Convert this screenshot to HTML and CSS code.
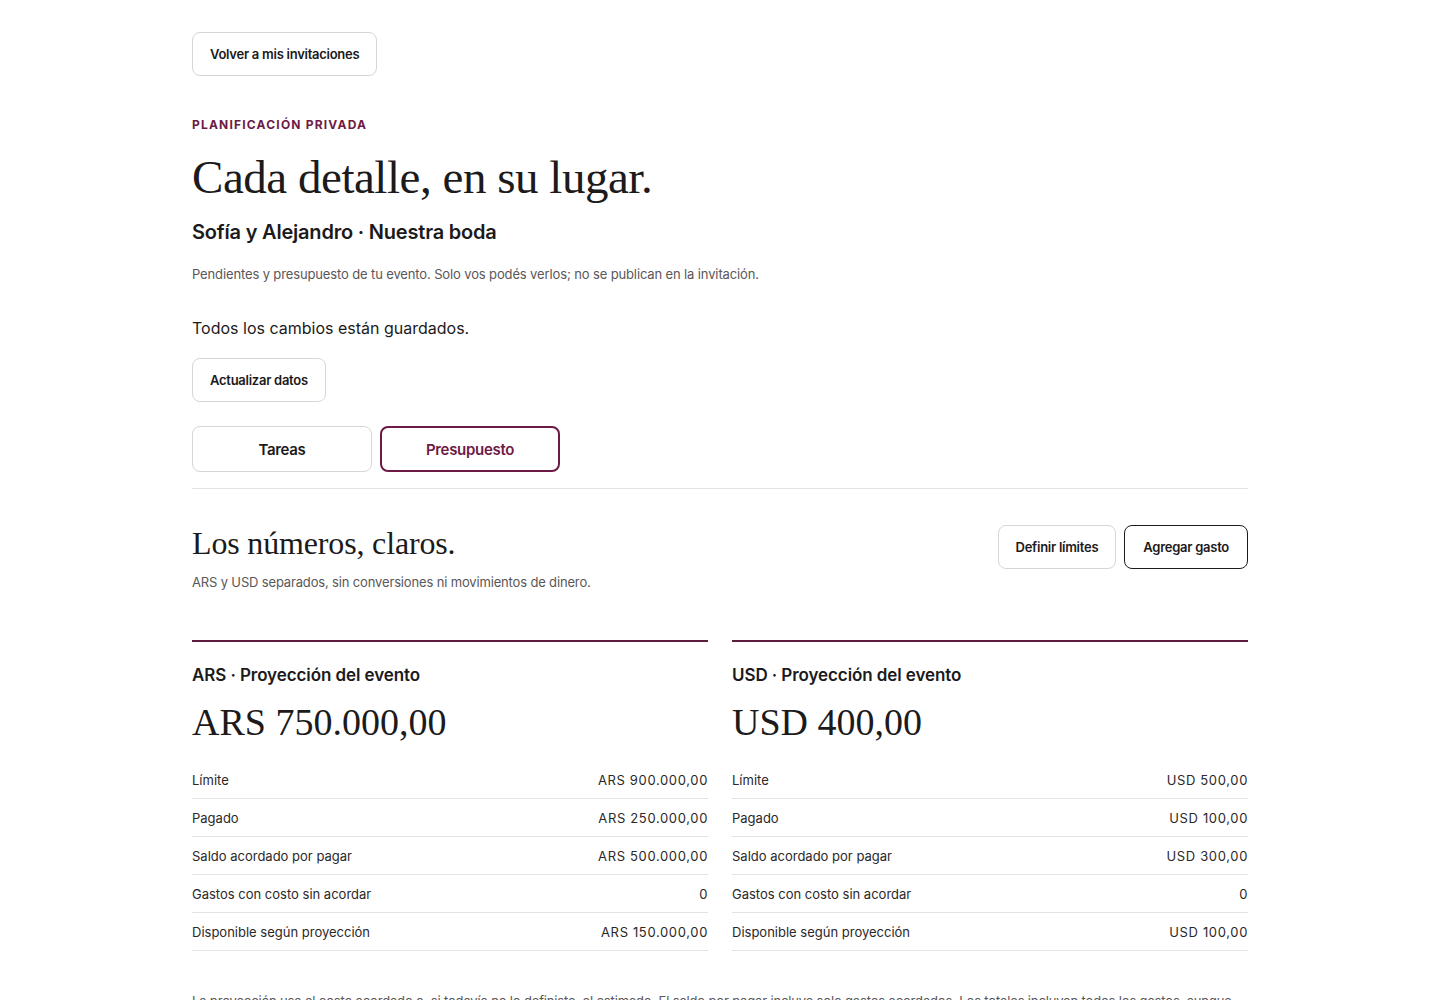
FILE: index.html
```html
<!DOCTYPE html>
<html lang="es">
<head>
<meta charset="utf-8">
<title>Planificación privada</title>
<link rel="stylesheet" href="styles.css">
</head>
<body>
<main class="page">
  <button class="btn btn-back">Volver a mis invitaciones</button>

  <p class="eyebrow">PLANIFICACIÓN PRIVADA</p>
  <h1 class="title">Cada detalle, en su lugar.</h1>
  <p class="event">Sofía y Alejandro · Nuestra boda</p>
  <p class="desc">Pendientes y presupuesto de tu evento. Solo vos podés verlos; no se publican en la invitación.</p>

  <p class="status">Todos los cambios están guardados.</p>
  <button class="btn btn-refresh">Actualizar datos</button>

  <div class="tabs">
    <button class="tab">Tareas</button>
    <button class="tab tab-active">Presupuesto</button>
  </div>

  <section class="budget">
    <div class="budget-head">
      <div>
        <h2 class="section-title">Los números, claros.</h2>
        <p class="section-sub">ARS y USD separados, sin conversiones ni movimientos de dinero.</p>
      </div>
      <div class="actions">
        <button class="btn">Definir límites</button>
        <button class="btn btn-dark">Agregar gasto</button>
      </div>
    </div>

    <div class="cards">
      <article class="card">
        <h3 class="card-title">ARS · Proyección del evento</h3>
        <p class="amount">ARS 750.000,00</p>
        <dl class="rows">
          <div class="row"><dt>Límite</dt><dd>ARS 900.000,00</dd></div>
          <div class="row"><dt>Pagado</dt><dd>ARS 250.000,00</dd></div>
          <div class="row"><dt>Saldo acordado por pagar</dt><dd>ARS 500.000,00</dd></div>
          <div class="row"><dt>Gastos con costo sin acordar</dt><dd>0</dd></div>
          <div class="row"><dt>Disponible según proyección</dt><dd>ARS 150.000,00</dd></div>
        </dl>
      </article>
      <article class="card">
        <h3 class="card-title">USD · Proyección del evento</h3>
        <p class="amount">USD 400,00</p>
        <dl class="rows">
          <div class="row"><dt>Límite</dt><dd>USD 500,00</dd></div>
          <div class="row"><dt>Pagado</dt><dd>USD 100,00</dd></div>
          <div class="row"><dt>Saldo acordado por pagar</dt><dd>USD 300,00</dd></div>
          <div class="row"><dt>Gastos con costo sin acordar</dt><dd>0</dd></div>
          <div class="row"><dt>Disponible según proyección</dt><dd>USD 100,00</dd></div>
        </dl>
      </article>
    </div>

    <p class="footnote">La proyección usa el costo acordado o, si todavía no lo definiste, el estimado. El saldo por pagar incluye solo gastos acordados. Los totales incluyen todos los gastos, aunque todavía no tengan fecha de pago.</p>
  </section>
</main>
</body>
</html>
```

FILE: styles.css
```css
* { box-sizing: border-box; }

html, body {
  margin: 0;
  padding: 0;
  background: #ffffff;
}

body {
  font-family: "Inter", "Liberation Sans", sans-serif;
  color: #1c1a1b;
  letter-spacing: 0;
}

.page {
  width: 1056px;
  margin: 0 auto;
  padding-top: 32px;
  display: flex;
  flex-direction: column;
  align-items: flex-start;
}

p, h1, h2, h3, dl, dt, dd { margin: 0; }

.btn {
  font-family: inherit;
  letter-spacing: -0.02em;
  height: 44px;
  padding: 0 17px;
  background: #fff;
  color: #1c1a1b;
  border: 1px solid #d6d6d6;
  border-radius: 8px;
  font-size: 13px;
  font-weight: 600;
  cursor: pointer;
}

.btn-dark {
  border-color: #1c1a1b;
  padding: 0 18px;
}

.eyebrow {
  margin-top: 41px;
  font-size: 12px;
  line-height: 16px;
  font-weight: 700;
  letter-spacing: 0.1em;
  color: #6d1a45;
}

.title {
  margin-top: 17px;
  font-family: "Liberation Serif", "Times New Roman", serif;
  font-weight: 400;
  font-size: 47px;
  line-height: 54px;
  letter-spacing: -0.01em;
  color: #1c1a1b;
}

.event {
  margin-top: 14px;
  font-size: 20px;
  line-height: 28px;
  font-weight: 600;
  letter-spacing: -0.01em;
}

.desc {
  margin-top: 18px;
  font-size: 13px;
  line-height: 20px;
  color: #5a5758;
  letter-spacing: -0.01em;
}

.status {
  margin-top: 32px;
  font-size: 16px;
  line-height: 24px;
  color: #1c1a1b;
  letter-spacing: 0;
}

.btn-refresh { margin-top: 18px; }

.tabs {
  margin-top: 24px;
  display: flex;
  gap: 8px;
  width: 100%;
  padding-bottom: 16px;
  border-bottom: 1px solid #e4e4e4;
}

.tab {
  width: 180px;
  height: 46px;
  font-family: inherit;
  letter-spacing: -0.02em;
  font-size: 15px;
  font-weight: 600;
  background: #fff;
  color: #1c1a1b;
  border: 1px solid #d6d6d6;
  border-radius: 8px;
  cursor: pointer;
}

.tab-active {
  border: 2px solid #6d1a45;
  color: #6d1a45;
}

.budget {
  width: 100%;
}

.budget-head {
  margin-top: 34px;
  display: flex;
  justify-content: space-between;
  align-items: flex-start;
}

.section-title {
  font-family: "Liberation Serif", "Times New Roman", serif;
  font-weight: 400;
  font-size: 32px;
  line-height: 40px;
  letter-spacing: -0.005em;
}

.section-sub {
  margin-top: 9px;
  font-size: 13px;
  line-height: 20px;
  color: #5a5758;
  letter-spacing: -0.012em;
}

.actions {
  margin-top: 2px;
  display: flex;
  gap: 8px;
}

.cards {
  margin-top: 48px;
  display: grid;
  grid-template-columns: 1fr 1fr;
  gap: 24px;
}

.card {
  border-top: 2px solid #5e1b3e;
  padding-top: 21px;
}

.card-title {
  font-size: 17px;
  line-height: 24px;
  font-weight: 600;
  letter-spacing: -0.005em;
}

.amount {
  margin-top: 12px;
  font-family: "Liberation Serif", "Times New Roman", serif;
  font-size: 38px;
  line-height: 46px;
  letter-spacing: 0;
}

.rows {
  margin-top: 16px;
}

.row {
  display: flex;
  justify-content: space-between;
  align-items: center;
  padding: 9px 0 8px;
  border-bottom: 1px solid #e4e4e4;
  font-size: 13px;
  line-height: 20px;
  color: #2b2829;
}

.row dd {
  letter-spacing: 0.05em;
}

.footnote {
  margin-top: 40px;
  font-size: 13px;
  line-height: 20px;
  color: #5a5758;
  letter-spacing: -0.012em;
}
```
